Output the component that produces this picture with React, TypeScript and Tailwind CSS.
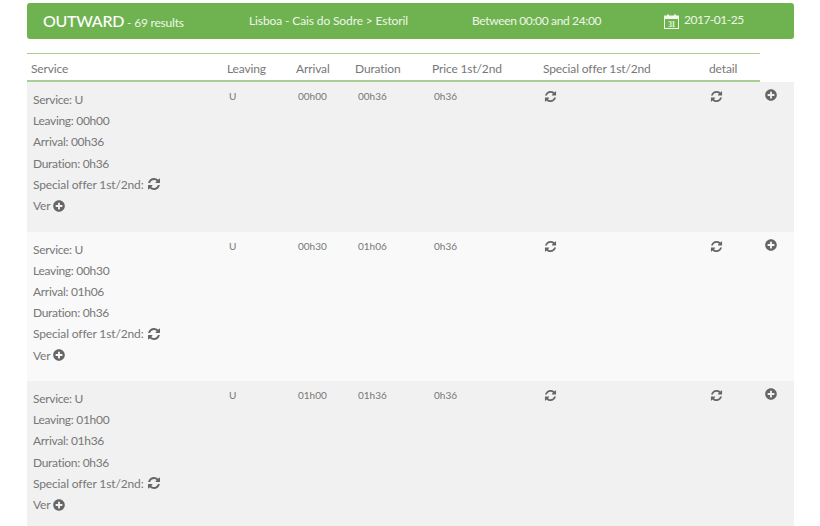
import { FaPlusCircle } from "react-icons/fa";

const rows = [
  { saida: "00h00", chegada: "00h36" },
  { saida: "00h30", chegada: "01h06" },
  { saida: "01h00", chegada: "01h36" },
];

const colunas = "grid grid-cols-[200px_69px_59px_77px_111px_166px_51px_34px]";

function RefreshIcon({ className }: { className: string }) {
  return (
    <svg viewBox="0 0 1792 1792" fill="currentColor" className={className}>
      <path d="M1639 1056q0 5-1 7-64 268-268 434.5t-478 166.5q-146 0-282.5-55t-243.5-157l-129 129q-19 19-45 19t-45-19-19-45v-448q0-26 19-45t45-19h448q26 0 45 19t19 45-19 45l-137 137q71 66 161 102t187 36q134 0 250-65t186-179q11-17 53-117 8-23 30-23h192q13 0 22.5 9.5t9.5 22.5zm25-800v448q0 26-19 45t-45 19h-448q-26 0-45-19t-19-45 19-45l138-138q-148-137-349-137-134 0-250 65t-186 179q-11 17-53 117-8 23-30 23h-199q-13 0-22.5-9.5t-9.5-22.5v-7q65-268 270-434.5t480-166.5q146 0 284 55.5t245 156.5l130-129q19-19 45-19t45 19 19 45z" />
    </svg>
  );
}

function CalendarIcon() {
  return (
    <svg width="15" height="15" viewBox="0 0 15 15" className="mr-[5px] mt-[1px]">
      <rect x="0.5" y="2" width="14" height="12.5" fill="none" stroke="#f1f7ec" strokeWidth="1" />
      <rect x="0.5" y="2" width="14" height="3" fill="#f1f7ec" />
      <rect x="3" y="0.5" width="2" height="3" fill="#f1f7ec" />
      <rect x="10" y="0.5" width="2" height="3" fill="#f1f7ec" />
      <text x="7.5" y="12.5" textAnchor="middle" fontSize="7.5" fontWeight="700" fill="#f1f7ec" fontFamily="Liberation Serif, serif">31</text>
    </svg>
  );
}

function Row({ saida, chegada, fundo }: { saida: string; chegada: string; fundo: string }) {
  return (
    <div className={`${colunas} h-[149.5px] shrink-0 ${fundo}`}>
      <div className="pl-[6px] pt-[7px] text-[12px] leading-[21.2px] tracking-[-0.14px] text-[#777]">
        <p className="tracking-[-0.3px]">Service: U</p>
        <p className="tracking-[-0.3px]">Leaving: {saida}</p>
        <p className="tracking-[-0.3px]">Arrival: {chegada}</p>
        <p className="tracking-[-0.3px]">Duration: 0h36</p>
        <p className="flex items-center">
          Special offer 1st/2nd: <RefreshIcon className="ml-[3px] h-[14px] w-[14px] text-[#666]" />
        </p>
        <p className="flex items-center">
          Ver <FaPlusCircle className="ml-[2px] text-[12px] text-[#666]" />
        </p>
      </div>
      <div className="pl-[2px] pt-[7px] text-[10px] leading-[14px] text-[#777]">U</div>
      <div className="pl-[2px] pt-[7px] text-[10px] leading-[14px] text-[#777]">{saida}</div>
      <div className="pl-[3px] pt-[7px] text-[10px] leading-[14px] text-[#777]">{chegada}</div>
      <div className="pl-[2px] pt-[7px] text-[10px] leading-[14px] text-[#777]">0h36</div>
      <div className="pl-[1px] pt-[8px]"><RefreshIcon className="h-[13px] w-[13px] text-[#666]" /></div>
      <div className="pl-[1px] pt-[8px]"><RefreshIcon className="h-[13px] w-[13px] text-[#666]" /></div>
      <div className="pl-[5px] pt-[7px]"><FaPlusCircle className="text-[12px] text-[#666]" /></div>
    </div>
  );
}

export default function App() {
  return (
    <div className="h-[526px] w-[820px] overflow-hidden bg-white pl-[27px] pr-[26px] pt-[3px] font-['Lato','Liberation_Sans',sans-serif]">
      <div className="flex h-[36px] items-center rounded-[3px] bg-[#6eb350] text-[#eef6e9]">
        <div className="w-[222px] pl-[16px]">
          <span className="text-[16px] font-medium tracking-[-0.3px] text-white">OUTWARD</span>
          <span className="text-[12px] tracking-[-0.2px]"> - 69 results</span>
        </div>
        <div className="w-[223px] text-[12px] tracking-[-0.12px]">Lisboa - Cais do Sodre &gt; Estoril</div>
        <div className="w-[192px] text-[12px] tracking-[-0.35px]">Between 00:00 and 24:00</div>
        <div className="flex items-center text-[12px] tracking-[-0.5px]">
          <CalendarIcon />
          <span className="-mt-[2px]">2017-01-25</span>
        </div>
      </div>
      <div className={`${colunas} mt-[14px] h-[29px] w-[733px] items-center border-t border-b-2 border-[#aacd94] pt-[3px] text-[12px] tracking-[-0.14px] text-[#777]`}>
        <div className="pl-[4px]">Service</div>
        <div>Leaving</div>
        <div>Arrival</div>
        <div>Duration</div>
        <div>Price 1st/2nd</div>
        <div>Special offer 1st/2nd</div>
        <div>detail</div>
      </div>
      <div className="flex flex-col">
        {rows.map((r, i) => (
          <Row key={r.saida} saida={r.saida} chegada={r.chegada} fundo={i % 2 === 0 ? "bg-[#f1f1f1]" : "bg-[#f9f9f9]"} />
        ))}
      </div>
    </div>
  );
}
